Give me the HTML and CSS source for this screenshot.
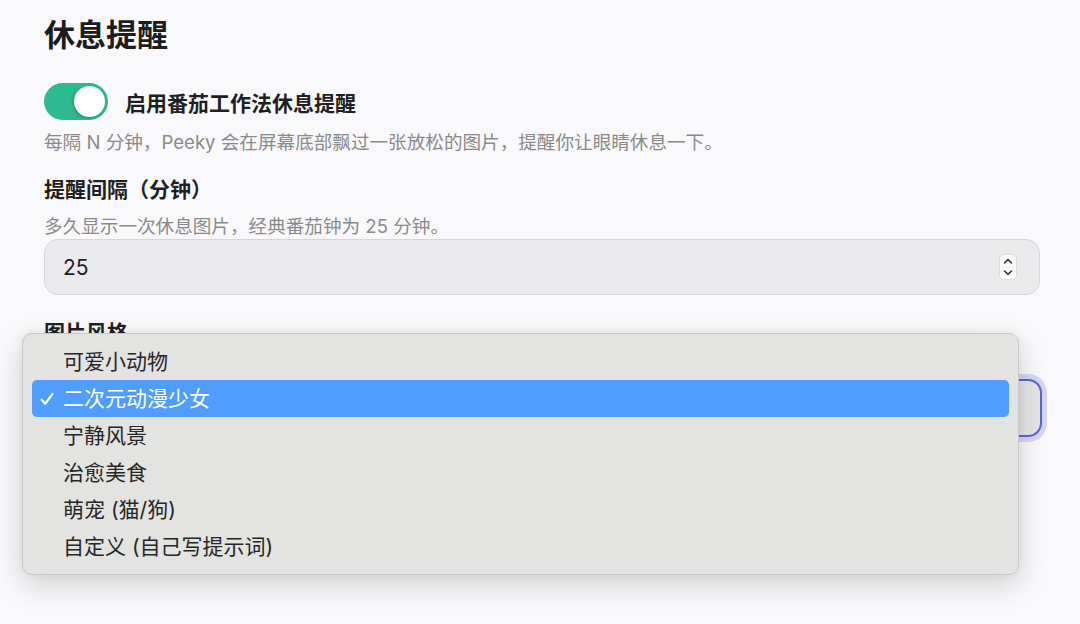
FILE: index.html
```html
<html lang="zh-CN">
    <head>
        <meta charset="UTF-8">
        <meta name="viewport" content="width=device-width, initial-scale=1.0">
        <title>休息提醒</title>
        <link rel="stylesheet" href="styles.css">
    </head>
    <body>
        <main class="settings">
            <h2 class="section-title">休息提醒</h2>

            <div class="toggle-row">
                <span class="toggle on"><span class="knob"></span></span>
                <span class="toggle-label">启用番茄工作法休息提醒</span>
            </div>
            <p class="hint hint-toggle">每隔 N 分钟，Peeky 会在屏幕底部飘过一张放松的图片，提醒你让眼睛休息一下。</p>

            <div class="field">
                <div class="field-label">提醒间隔（分钟）</div>
                <p class="hint">多久显示一次休息图片，经典番茄钟为 25 分钟。</p>
                <div class="number-input">
                    <span class="value">25</span>
                    <svg class="stepper" width="18" height="26" viewBox="0 0 18 26">
                        <rect x="0.5" y="0.5" width="17" height="25" rx="4.5" fill="#ffffff" stroke="#dcdcdc"/>
                        <line x1="2" y1="13" x2="16" y2="13" stroke="#e4e4e4"/>
                        <path d="M5.5 9 L9 5.6 L12.5 9" fill="none" stroke="#333" stroke-width="1.6" stroke-linecap="round" stroke-linejoin="round"/>
                        <path d="M5.5 17 L9 20.4 L12.5 17" fill="none" stroke="#333" stroke-width="1.6" stroke-linecap="round" stroke-linejoin="round"/>
                    </svg>
                </div>
            </div>

            <div class="field select-field">
                <div class="field-label">图片风格</div>
                <div class="select-box focused"></div>

                <ul class="menu">
                    <li>可爱小动物</li>
                    <li class="selected">
                        <svg class="check" width="16" height="16" viewBox="0 0 16 16">
                            <path d="M2.5 8.6 L6.2 12.8 L13.5 2.8" fill="none" stroke="#ffffff" stroke-width="2.2" stroke-linecap="round" stroke-linejoin="round"/>
                        </svg>二次元动漫少女
                    </li>
                    <li>宁静风景</li>
                    <li>治愈美食</li>
                    <li>萌宠 (猫/狗)</li>
                    <li>自定义 (自己写提示词)</li>
                </ul>
            </div>
        </main>
    </body>
</html>
```

FILE: styles.css
```css
body {
    margin: 0;
    padding: 0;
    background-color: #f9f9fb;
    font-family: Inter, 'Noto Sans CJK SC', sans-serif;
    color: #1f1f1f;
}
.settings {
    padding: 17px 40px 0 44px;
}
.section-title {
    margin: 0;
    font-size: 31px;
    line-height: 36px;
    font-weight: 700;
    color: #1c1c1c;
}
.toggle-row {
    display: flex;
    align-items: center;
    gap: 17px;
    margin-top: 30px;
    height: 37px;
}
.toggle {
    position: relative;
    width: 64px;
    height: 37px;
    border-radius: 19px;
    background: #2fb991;
    box-sizing: border-box;
}
.toggle .knob {
    position: absolute;
    top: 3px;
    right: 3px;
    width: 31px;
    height: 31px;
    border-radius: 50%;
    background: #ffffff;
    box-shadow: -1px 1px 3px rgba(0, 0, 0, 0.25);
}
.toggle-label {
    font-size: 21px;
    font-weight: 700;
    color: #1f1f1f;
}
.hint {
    margin: 0;
    font-size: 18.6px;
    line-height: 24px;
    color: #8a8a8a;
}
.hint-toggle {
    margin-top: 10px;
}
.field {
    margin-top: 22px;
}
.field-label {
    font-size: 21px;
    line-height: 28px;
    font-weight: 700;
    color: #1f1f1f;
}
.field .hint {
    margin-top: 10px;
}
.number-input {
    display: flex;
    align-items: center;
    justify-content: space-between;
    margin-top: 1px;
    height: 56px;
    box-sizing: border-box;
    padding: 0 22px 0 18px;
    background: #ebebed;
    border: 1px solid #d6d6d8;
    border-radius: 14px;
}
.number-input .value {
    font-size: 21px;
    color: #1f1f1f;
}
.stepper {
    display: block;
}
.select-field {
    position: relative;
    margin-top: 24px;
}
.select-box {
    margin-top: 32px;
    height: 58px;
    margin-right: -2px;
    box-sizing: border-box;
    background: #e5e5e7;
    border-radius: 14px;
}
.select-box.focused {
    border: 2px solid #5b64d9;
    box-shadow: 0 0 0 5px rgba(94, 108, 226, 0.25);
}
.menu {
    position: absolute;
    top: 14px;
    left: -22px;
    width: 997px;
    box-sizing: border-box;
    margin: 0;
    padding: 9px 9px;
    list-style: none;
    background: #e3e3e1;
    border: 1px solid #c9c9c9;
    border-radius: 10px;
    box-shadow: 0 10px 30px rgba(0, 0, 0, 0.16), 0 0 8px rgba(0, 0, 0, 0.06);
}
.menu li {
    position: relative;
    height: 37px;
    line-height: 37px;
    padding-left: 31px;
    font-size: 21px;
    color: #262626;
    border-radius: 5px;
}
.menu li.selected {
    background: #509dfe;
    color: #ffffff;
}
.menu .check {
    position: absolute;
    left: 7px;
    top: 11px;
}
```
